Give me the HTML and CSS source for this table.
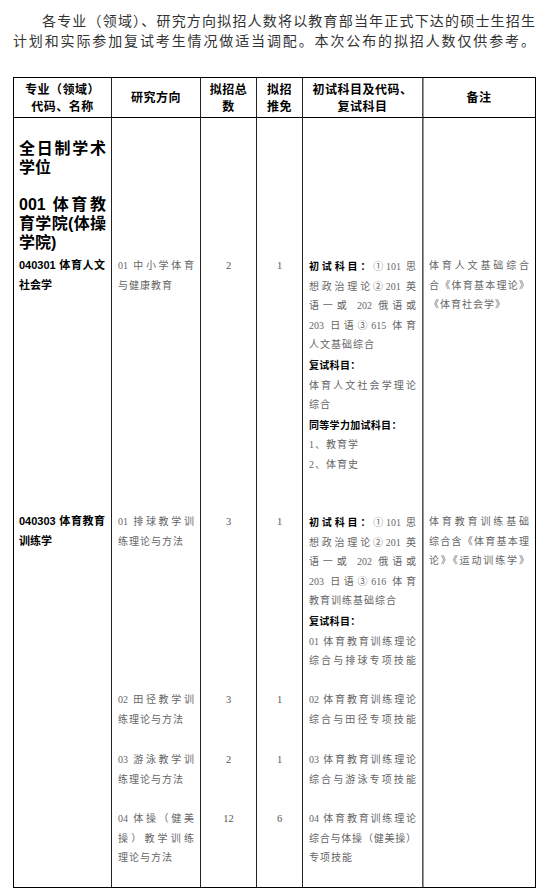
FILE: index.html
```html
<!DOCTYPE html>
<html lang="zh-CN">
<head>
<meta charset="utf-8">
<title>拟招人数</title>
<link rel="stylesheet" href="styles.css">
</head>
<body>
<p class="intro"><span class="ln j first">各专业（领域）、研究方向拟招人数将以教育部当年正式下达的硕士生招生</span><span class="ln j">计划和实际参加复试考生情况做适当调配。本次公布的拟招人数仅供参考。</span></p>

<div class="plan">
  <div class="th c1"><span>专业（领域）</span><span>代码、名称</span></div>
  <div class="th"><span>研究方向</span></div>
  <div class="th"><span>拟招总</span><span>数</span></div>
  <div class="th"><span>拟招</span><span>推免</span></div>
  <div class="th"><span>初试科目及代码、</span><span>复试科目</span></div>
  <div class="th c6"><span>备注</span></div>

  <div class="td c1 lead">
    <div class="title"><span class="ln j">全日制学术</span><span class="ln">学位</span></div>
    <div class="title school"><span class="ln j">001 体育教</span><span class="ln j">育学院(体操</span><span class="ln">学院)</span></div>
  </div>
  <div class="td"></div>
  <div class="td"></div>
  <div class="td"></div>
  <div class="td"></div>
  <div class="td c6"></div>

  <div class="td c1 major"><span class="ln j">040301 体育人文</span><span class="ln">社会学</span></div>
  <div class="td"><span class="ln j">01 中小学体育</span><span class="ln">与健康教育</span></div>
  <div class="td num">2</div>
  <div class="td num">1</div>
  <div class="td">
    <span class="ln j"><b>初试科目：</b>①101 思</span>
    <span class="ln j">想政治理论②201 英</span>
    <span class="ln j">语一或 202 俄语或</span>
    <span class="ln j">203 日语③615 体育</span>
    <span class="ln">人文基础综合</span>
    <span class="ln"><b>复试科目：</b></span>
    <span class="ln j">体育人文社会学理论</span>
    <span class="ln">综合</span>
    <span class="ln"><b>同等学力加试科目：</b></span>
    <span class="ln">1、教育学</span>
    <span class="ln">2、体育史</span>
  </div>
  <div class="td c6"><span class="ln j">体育人文基础综合</span><span class="ln j">合《体育基本理论》</span><span class="ln">《体育社会学》</span></div>

  <div class="td c1 major span4"><span class="ln j">040303 体育教育</span><span class="ln">训练学</span></div>
  <div class="td"><span class="ln j">01 排球教学训</span><span class="ln">练理论与方法</span></div>
  <div class="td num">3</div>
  <div class="td num">1</div>
  <div class="td">
    <span class="ln j"><b>初试科目：</b>①101 思</span>
    <span class="ln j">想政治理论②201 英</span>
    <span class="ln j">语一或 202 俄语或</span>
    <span class="ln j">203 日语③616 体育</span>
    <span class="ln">教育训练基础综合</span>
    <span class="ln"><b>复试科目：</b></span>
    <span class="ln j">01 体育教育训练理论</span>
    <span class="ln j">综合与排球专项技能</span>
  </div>
  <div class="td c6 span4"><span class="ln j">体育教育训练基础</span><span class="ln j">综合含《体育基本理</span><span class="ln j">论》《运动训练学》</span></div>

  <div class="td"><span class="ln j">02 田径教学训</span><span class="ln">练理论与方法</span></div>
  <div class="td num">3</div>
  <div class="td num">1</div>
  <div class="td"><span class="ln j">02 体育教育训练理论</span><span class="ln j">综合与田径专项技能</span></div>

  <div class="td"><span class="ln j">03 游泳教学训</span><span class="ln">练理论与方法</span></div>
  <div class="td num">2</div>
  <div class="td num">1</div>
  <div class="td"><span class="ln j">03 体育教育训练理论</span><span class="ln j">综合与游泳专项技能</span></div>

  <div class="td"><span class="ln j">04 体操（健美</span><span class="ln j">操）教学训练</span><span class="ln">理论与方法</span></div>
  <div class="td num">12</div>
  <div class="td num">6</div>
  <div class="td"><span class="ln j">04 体育教育训练理论</span><span class="ln j">综合与体操（健美操）</span><span class="ln">专项技能</span></div>
</div>
</body>
</html>
```
FILE: styles.css
```css
html, body {
  margin: 0;
  padding: 0;
  background: #fff;
}

body {
  width: 547px;
  height: 894px;
  overflow: hidden;
  font-family: "Liberation Serif", "Noto Sans CJK SC", serif;
  color: #333;
}

.ln {
  display: block;
  white-space: nowrap;
}

.j {
  text-align: justify;
  text-align-last: justify;
}

.intro {
  margin: 0;
  padding: 12px 12px 0 13px;
  font-size: 14px;
  line-height: 20px;
  color: #333;
}

.intro .first {
  padding-left: 29px;
}

.plan {
  margin: 25px 0 0 13px;
  width: 523px;
  box-sizing: border-box;
  border: 1px solid #000;
  display: grid;
  grid-template-columns: 97px 89px 56px 46px 120px 113px;
  grid-template-rows: 40px 138px 256px 178px 60px 59px 78px;
}

.th, .td {
  border-left: 1px solid #222;
  min-width: 0;
}

.c1 {
  border-left: 0;
}

.c6 {
  border-left: 1px solid #555;
  box-shadow: inset 1px 0 0 #999;
}

.th {
  border-bottom: 1px solid #000;
  display: flex;
  flex-direction: column;
  justify-content: center;
  align-items: center;
  font-family: "Noto Sans CJK SC", sans-serif;
  font-weight: 700;
  font-size: 12px;
  line-height: 16.5px;
  letter-spacing: 0.5px;
  color: #000;
}

.td {
  padding: 0 6px;
  font-size: 10px;
  line-height: 19.6px;
  letter-spacing: 1px;
  color: #666;
}

.td .j {
  letter-spacing: 0;
}

.td b {
  font-family: "Noto Sans CJK SC", sans-serif;
  font-weight: 700;
  color: #000;
  letter-spacing: 0.3px;
}

.num {
  text-align: center;
  letter-spacing: 0;
  font-size: 10.5px;
  color: #555;
}

.span4 {
  grid-row: span 4;
}

.lead {
  padding: 21px 5px 0 5px;
}

.title {
  font-family: "Liberation Sans", "Noto Sans CJK SC", sans-serif;
  font-weight: 700;
  font-size: 16px;
  line-height: 19px;
  letter-spacing: 0;
  color: #000;
}

.title.school {
  margin-top: 18px;
}

.major {
  padding: 0 6px 0 5px;
  font-family: "Liberation Sans", "Noto Sans CJK SC", sans-serif;
  font-weight: 700;
  font-size: 11px;
  letter-spacing: 0;
  color: #000;
}

.major .j,
.title .j {
  letter-spacing: 0;
}
```
